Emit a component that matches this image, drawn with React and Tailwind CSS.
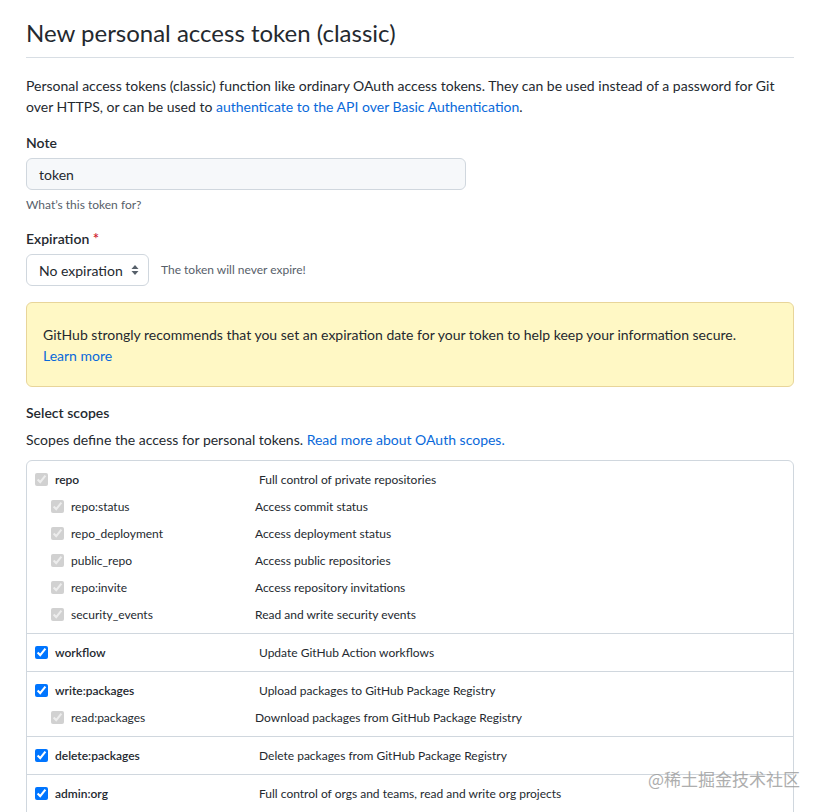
import React from "react";

const Check = ({ disabled }) => (
  <input
    type="checkbox"
    checked
    disabled={disabled}
    readOnly
    className="m-0 h-[13px] w-[13px] shrink-0"
  />
);

const Row = ({ name, desc, sub, top }) => (
  <div className="flex h-[27px] items-center">
    {sub ? (
      <>
        <div className="flex w-[228px] items-center pl-[24px]">
          <Check disabled />
          <span className="ml-[7px] text-[12px] text-[#24292f]">{name}</span>
        </div>
        <span className="text-[12px] text-[#24292f]">{desc}</span>
      </>
    ) : (
      <>
        <div className="flex w-[232px] items-center pl-[8px]">
          <Check disabled={top === "disabled"} />
          <span className="ml-[7px] text-[12px] font-semibold text-[#24292f]">{name}</span>
        </div>
        <span className="text-[12px] text-[#24292f]">{desc}</span>
      </>
    )}
  </div>
);

export default function App() {
  return (
    <div
      className="relative h-[812px] w-[826px] overflow-hidden bg-white text-[#24292f]"
      style={{ fontFamily: 'Lato, "Open Sans", sans-serif' }}
    >
      <div className="ml-[26px] mr-[32px]">
        <div className="border-b border-[#d8dee4] pb-[7px] pt-[16px]">
          <h1 className="text-[24px] font-normal leading-[34px]">New personal access token (classic)</h1>
        </div>
        <p className="mt-[17px] text-[14px] leading-[21px]">
          Personal access tokens (classic) function like ordinary OAuth access tokens. They can be used instead of a password for Git over HTTPS, or can be used to{" "}
          <span className="text-[#0969da]">authenticate to the API over Basic Authentication</span>.
        </p>

        <div className="mt-[15px] text-[14px] font-semibold leading-[21px]">Note</div>
        <div className="mt-[5px] flex h-[32px] w-[440px] items-center rounded-[6px] border border-[#d0d7de] bg-[#f6f8fa] px-[12px] text-[14px]">
          token
        </div>
        <div className="mt-[6px] text-[12px] leading-[18px] text-[#57606a]">What’s this token for?</div>

        <div className="mt-[14px] text-[14px] font-semibold leading-[21px]">
          Expiration <span className="text-[15px] text-[#cf222e]">*</span>
        </div>
        <div className="mt-[5px] flex items-center">
          <div className="flex h-[32px] w-[123px] items-center justify-between rounded-[6px] border border-[#d0d7de] bg-white pl-[12px] pr-[8px] text-[14px]">
            <span>No expiration</span>
            <svg width="10" height="14" viewBox="0 0 10 14">
              <path d="M5 2 L8.5 6 L1.5 6 Z" fill="#57606a" />
              <path d="M5 12 L8.5 8 L1.5 8 Z" fill="#57606a" />
            </svg>
          </div>
          <span className="ml-[12px] text-[12px] text-[#57606a]">The token will never expire!</span>
        </div>

        <div className="mt-[16px] rounded-[6px] border border-[#e8d59a] bg-[#fff8c5] px-[16px] pb-[20px] pt-[21px] text-[14px] leading-[21px]">
          GitHub strongly recommends that you set an expiration date for your token to help keep your information secure.
          <br />
          <span className="text-[#0969da]">Learn more</span>
        </div>

        <div className="mt-[15px] text-[14px] font-semibold leading-[21px]">Select scopes</div>
        <p className="mt-[6px] text-[14px] leading-[21px]">
          Scopes define the access for personal tokens.{" "}
          <span className="text-[#0969da]">Read more about OAuth scopes.</span>
        </p>

        <div className="mt-[10px] rounded-t-[6px] border border-[#d0d7de]">
          <div className="py-[5px]">
            <Row name="repo" desc="Full control of private repositories" top="disabled" />
            <Row sub name="repo:status" desc="Access commit status" />
            <Row sub name="repo_deployment" desc="Access deployment status" />
            <Row sub name="public_repo" desc="Access public repositories" />
            <Row sub name="repo:invite" desc="Access repository invitations" />
            <Row sub name="security_events" desc="Read and write security events" />
          </div>
          <div className="border-t border-[#d0d7de] py-[5px]">
            <Row name="workflow" desc="Update GitHub Action workflows" />
          </div>
          <div className="border-t border-[#d0d7de] py-[5px]">
            <Row name="write:packages" desc="Upload packages to GitHub Package Registry" />
            <Row sub name="read:packages" desc="Download packages from GitHub Package Registry" />
          </div>
          <div className="border-t border-[#d0d7de] py-[5px]">
            <Row name="delete:packages" desc="Delete packages from GitHub Package Registry" />
          </div>
          <div className="border-t border-[#d0d7de] py-[5px]">
            <Row name="admin:org" desc="Full control of orgs and teams, read and write org projects" />
          </div>
        </div>
      </div>
      <div
        className="absolute left-[648px] top-[766px] text-[17px] text-[#9a9a9a] opacity-80"
        style={{ fontFamily: '"Noto Sans CJK SC", sans-serif' }}
      >
        @稀土掘金技术社区
      </div>
    </div>
  );
}
